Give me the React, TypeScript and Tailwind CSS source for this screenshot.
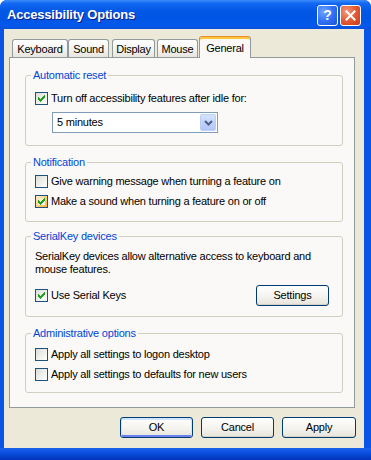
import React from "react";

const F = "font-['Liberation_Sans',Arial,sans-serif]";

function Check() {
  return (
    <svg className="relative" width="7" height="7" viewBox="0 0 7 7" shapeRendering="crispEdges">
      <path
        fill="#21A121"
        d="M6 0h1v1h-1z M5 1h2v1h-2z M0 2h1v1h-1z M4 2h3v1h-3z M0 3h2v1h-2z M3 3h3v1h-3z M0 4h5v1h-5z M1 5h3v1h-3z M2 6h1v1h-1z"
      />
    </svg>
  );
}

function Box({ checked = false, hot = false }: { checked?: boolean; hot?: boolean }) {
  return (
    <span
      className={`relative w-[13px] h-[13px] shrink-0 border border-[#1C5180] flex items-center justify-center ${
        hot
          ? "bg-[linear-gradient(135deg,#FFF0CF,#F8B330)]"
          : "bg-[linear-gradient(135deg,#DCDCD7,#FFFFFF)]"
      }`}
    >
      {hot && <span className="absolute inset-[2px] bg-[linear-gradient(135deg,#F4E4B8,#FFFFFF)]" />}
      {checked && <Check />}
    </span>
  );
}

function Row({ label, checked, hot }: { label: string; checked?: boolean; hot?: boolean }) {
  return (
    <div className="flex items-center h-[13px] gap-[3px]">
      <Box checked={checked} hot={hot} />
      <span className="leading-[13px] whitespace-nowrap">{label}</span>
    </div>
  );
}

function Btn({
  children,
  def = false,
  w,
}: {
  children: React.ReactNode;
  def?: boolean;
  w: string;
}) {
  return (
    <div
      className={`${w} h-[21px] rounded-[3px] border border-[#003C74] bg-[linear-gradient(180deg,#FFFFFF_0%,#F4F3EE_55%,#E6E3DA_100%)] flex items-center justify-center text-[11px] text-black leading-[13px] ${
        def
          ? "shadow-[inset_0_1px_0_1px_#CEE7FF,inset_0_-1px_0_1px_#6982EE]"
          : "shadow-[inset_0_-1px_0_0_#D6D0C5]"
      }`}
    >
      {children}
    </div>
  );
}

function Group({
  title,
  className,
  children,
}: {
  title: string;
  className: string;
  children: React.ReactNode;
}) {
  return (
    <fieldset className={`border border-[#D0D0BF] rounded-[3px] m-0 p-0 min-w-0 ${className}`}>
      <legend className="ml-[5px] px-[2px] text-[#0046D5] leading-[13px] text-[11px]">{title}</legend>
      {children}
    </fieldset>
  );
}

function Tab({ label, w, sel = false, ml }: { label: string; w: string; sel?: boolean; ml: string }) {
  if (sel) {
    return (
      <div
        className={`${w} ${ml} h-[22px] mb-[-1px] relative z-10 rounded-t-[3px] border-x border-t border-[#919B9C] border-t-[#E68B2C] bg-[#FAF9F7] shadow-[inset_0_2px_0_0_#FFC73C] flex items-center justify-center pt-[1px]`}
      >
        <span className="leading-[13px]">{label}</span>
      </div>
    );
  }
  return (
    <div
      className={`${w} ${ml} h-[18px] rounded-t-[3px] border-x border-t border-[#919B9C] bg-[linear-gradient(180deg,#FFFFFF_0%,#F3F2EE_60%,#E7E5DD_100%)] flex items-center justify-center pt-[1px]`}
    >
      <span className="leading-[13px]">{label}</span>
    </div>
  );
}

export default function App() {
  return (
    <div className={`${F} text-[11px] tracking-[-0.22px] text-black w-[371px] h-[460px] flex flex-col bg-[#0A55E6] rounded-t-[7px] overflow-hidden select-none`}>
      {/* Title bar */}
      <div className="h-[29px] shrink-0 flex items-center bg-[linear-gradient(180deg,#3C8CFB_0%,#1268F2_12%,#0459E6_35%,#0055E4_60%,#0559EB_88%,#0B4FD8_100%)] pl-[7px] pr-[10px]">
        <span className="text-white font-bold text-[13px] tracking-[-0.2px] leading-[16px] [text-shadow:1px_1px_0_#0A1E8C] pt-[1px]">
          Accessibility Options
        </span>
        <div className="ml-auto flex gap-[2px] items-center pt-[1px]">
          <div className="w-[21px] h-[21px] rounded-[3px] border border-white bg-[radial-gradient(circle_at_30%_30%,#6FA3FF_0%,#2F6EF3_55%,#1B53D6_100%)] flex items-center justify-center">
            <span className="text-white font-bold text-[14px] leading-[14px]">?</span>
          </div>
          <div className="w-[21px] h-[21px] rounded-[3px] border border-white bg-[radial-gradient(circle_at_30%_30%,#F29A7C_0%,#E35A34_50%,#C83D17_100%)] flex items-center justify-center">
            <svg width="11" height="11" viewBox="0 0 11 11">
              <path d="M1.5 1.5 L9.5 9.5 M9.5 1.5 L1.5 9.5" stroke="#FFFFFF" strokeWidth="2" strokeLinecap="square" />
            </svg>
          </div>
        </div>
      </div>

      {/* Middle */}
      <div className="flex-1 flex min-h-0">
        <div className="flex-1 ml-[4px] mr-[7px] bg-[#ECE9D8] flex flex-col pl-[5px] pr-[9px] pt-[7px]">
          {/* Tabs */}
          <div className="flex items-end h-[21px] shrink-0">
            <Tab label="Keyboard" w="w-[56px]" ml="ml-[3px]" />
            <Tab label="Sound" w="w-[41px]" ml="ml-0" />
            <Tab label="Display" w="w-[43px]" ml="ml-[3px]" />
            <Tab label="Mouse" w="w-[41px]" ml="ml-[2px]" />
            <Tab label="General" w="w-[52px]" ml="ml-px" sel />
          </div>
          {/* Panel */}
          <div className="h-[351px] shrink-0 border border-[#919B9C] bg-[#FAF9F7] pl-[15px] pr-[11px] pt-[11px] flex flex-col">
            <Group title="Automatic reset" className="">
              <div className="pl-[9px] pt-[10px] pb-[12px] flex flex-col">
                <Row label="Turn off accessibility features after idle for:" checked />
                <div className="ml-[17px] mt-[7px] w-[166px] h-[21px] border border-[#7F9DB9] bg-white flex items-center">
                  <span className="pl-[4px] flex-1 leading-[13px]">5 minutes</span>
                  <div className="w-[16px] h-[17px] mr-px rounded-[2px] border border-[#B9CDF7] bg-[linear-gradient(180deg,#D6E3FE_0%,#C0D3FB_50%,#B2C7F6_100%)] flex items-center justify-center">
                    <svg width="9" height="6" viewBox="0 0 9 6">
                      <path d="M1 1 L4.5 4.5 L8 1" stroke="#4D6185" strokeWidth="2" fill="none" />
                    </svg>
                  </div>
                </div>
              </div>
            </Group>

            <Group title="Notification" className="mt-[10px]">
              <div className="pl-[9px] pt-[6px] pb-[13px] flex flex-col gap-[7px]">
                <Row label="Give warning message when turning a feature on" />
                <Row label="Make a sound when turning a feature on or off" checked hot />
              </div>
            </Group>

            <Group title="SerialKey devices" className="mt-[8px]">
              <div className="pl-[9px] pr-[13px] pt-[7px] pb-[10px] flex flex-col">
                <p className="leading-[13px] m-0">
                  SerialKey devices allow alternative access to keyboard and
                  <br />
                  mouse features.
                </p>
                <div className="mt-[9px] flex items-center justify-between">
                  <Row label="Use Serial Keys" checked />
                  <Btn w="w-[73px]">Settings</Btn>
                </div>
              </div>
            </Group>

            <Group title="Administrative options" className="mt-[10px]">
              <div className="pl-[9px] pt-[8px] pb-[11px] flex flex-col gap-[7px]">
                <Row label="Apply all settings to logon desktop" />
                <Row label="Apply all settings to defaults for new users" />
              </div>
            </Group>
          </div>
          {/* Buttons */}
          <div className="mt-[9px] flex justify-end gap-[8px] mr-[-1px]">
            <Btn w="w-[73px]" def>
              OK
            </Btn>
            <Btn w="w-[73px]">Cancel</Btn>
            <Btn w="w-[74px]">Apply</Btn>
          </div>
        </div>
      </div>
      <div className="h-[12px] shrink-0 bg-[linear-gradient(180deg,#1A63EE_0%,#0A4FE0_40%,#0033B8_100%)]" />
    </div>
  );
}
